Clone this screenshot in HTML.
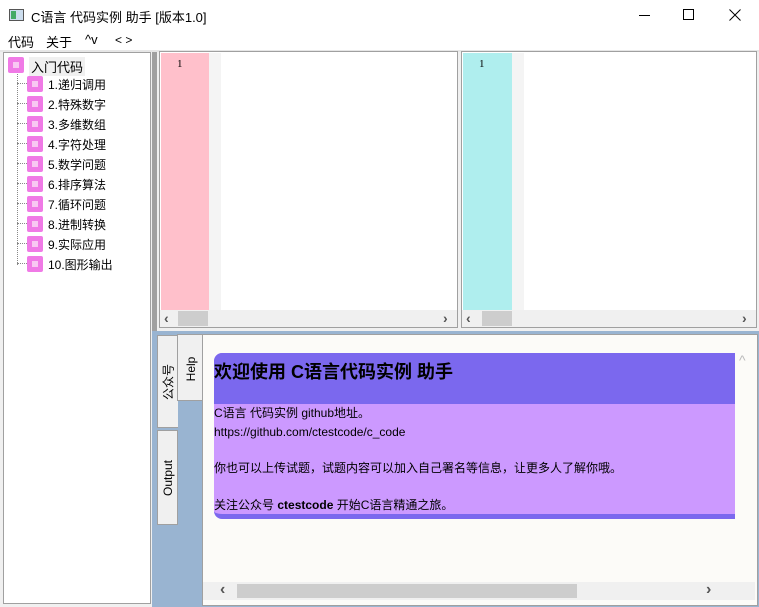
<!DOCTYPE html>
<html><head><meta charset="utf-8"><style>
*{margin:0;padding:0;box-sizing:border-box}
body{width:759px;height:607px;overflow:hidden;background:#f0f0f0;font-family:"Liberation Sans","Noto Sans CJK SC",sans-serif;font-size:12px;color:#000;position:relative}
.a{position:absolute}
.title{left:0;top:0;width:759px;height:30px;background:#fff}
.menu{left:0;top:30px;width:759px;height:20px;background:#fff}
.tree{left:3px;top:52px;width:148px;height:552px;background:#fff;border:1px solid #a0a0a0}
.ico{width:16px;height:16px;background:#f07ae6;border-radius:2px}
.ico::after{content:"";position:absolute;left:5px;top:5px;width:6px;height:6px;background:#f8c8f2}
.lbl{font-size:12px;white-space:nowrap}
.ed{border:1px solid #a0a0a0;background:#fff}
.sb{background:#f0f0f0}
.tab{background:#f0f0f0;border:1px solid #a0a0a0}
.rt{position:absolute;white-space:nowrap;font-size:12px;transform:translate(-50%,-50%) rotate(-90deg)}
.ln{position:absolute;left:0;white-space:nowrap;font-size:12px}
</style></head><body>
<div class="a title">
 <div class="a" style="left:9px;top:9px;width:15px;height:12px;border:1px solid #555;background:#cde"><div class="a" style="left:1px;top:1px;width:5px;height:8px;background:#4a6"></div></div>
 <div class="a" style="left:31px;top:7px;font-size:13px">C语言 代码实例 助手 [版本1.0]</div>
 <div class="a" style="left:639px;top:15px;width:11px;height:1px;background:#000"></div>
 <div class="a" style="left:683px;top:9px;width:11px;height:11px;border:1px solid #000"></div>
 <svg class="a" style="left:729px;top:9px" width="12" height="12"><path d="M0.5 0.5L11.5 11.5M11.5 0.5L0.5 11.5" stroke="#000" stroke-width="1"/></svg>
</div>
<div class="a menu">
 <div class="a" style="left:8px;top:2px;font-size:13px">代码</div>
 <div class="a" style="left:46px;top:2px;font-size:13px">关于</div>
 <div class="a" style="left:85px;top:2px;font-size:13px">^v</div>
 <div class="a" style="left:115px;top:3px">&lt; &gt;</div>
</div>
<div class="a" style="left:0;top:50px;width:759px;height:2px;background:#e6e6e6"></div>
<div class="a tree">
 <div class="a" style="left:13px;top:19px;height:193px;border-left:1px dotted #888"></div>
 <div class="a ico" style="left:4px;top:4px"></div>
 <div class="a lbl" style="left:25px;top:4px;background:#f0f0f0;padding:0 2px;font-size:13px">入门代码</div>
</div>
<div class="a" style="left:3px;top:52px">
 <div class="a" style="left:14px;top:31px;width:12px;border-top:1px dotted #888"></div><div class="a ico" style="left:24px;top:24px"></div><div class="a lbl" style="left:45px;top:24px">1.递归调用</div>
 <div class="a" style="left:14px;top:51px;width:12px;border-top:1px dotted #888"></div><div class="a ico" style="left:24px;top:44px"></div><div class="a lbl" style="left:45px;top:44px">2.特殊数字</div>
 <div class="a" style="left:14px;top:71px;width:12px;border-top:1px dotted #888"></div><div class="a ico" style="left:24px;top:64px"></div><div class="a lbl" style="left:45px;top:64px">3.多维数组</div>
 <div class="a" style="left:14px;top:91px;width:12px;border-top:1px dotted #888"></div><div class="a ico" style="left:24px;top:84px"></div><div class="a lbl" style="left:45px;top:84px">4.字符处理</div>
 <div class="a" style="left:14px;top:111px;width:12px;border-top:1px dotted #888"></div><div class="a ico" style="left:24px;top:104px"></div><div class="a lbl" style="left:45px;top:104px">5.数学问题</div>
 <div class="a" style="left:14px;top:131px;width:12px;border-top:1px dotted #888"></div><div class="a ico" style="left:24px;top:124px"></div><div class="a lbl" style="left:45px;top:124px">6.排序算法</div>
 <div class="a" style="left:14px;top:151px;width:12px;border-top:1px dotted #888"></div><div class="a ico" style="left:24px;top:144px"></div><div class="a lbl" style="left:45px;top:144px">7.循环问题</div>
 <div class="a" style="left:14px;top:171px;width:12px;border-top:1px dotted #888"></div><div class="a ico" style="left:24px;top:164px"></div><div class="a lbl" style="left:45px;top:164px">8.进制转换</div>
 <div class="a" style="left:14px;top:191px;width:12px;border-top:1px dotted #888"></div><div class="a ico" style="left:24px;top:184px"></div><div class="a lbl" style="left:45px;top:184px">9.实际应用</div>
 <div class="a" style="left:14px;top:211px;width:12px;border-top:1px dotted #888"></div><div class="a ico" style="left:24px;top:204px"></div><div class="a lbl" style="left:45px;top:204px">10.图形输出</div>
</div>
<div class="a" style="left:152px;top:52px;width:5px;height:555px;background:#a0a0a0"></div>
<div class="a ed" style="left:159px;top:51px;width:299px;height:277px">
 <div class="a" style="left:1px;top:1px;width:48px;height:257px;background:#ffc0cb"></div>
 <div class="a" style="left:17px;top:6px;font-size:11px;font-family:'Liberation Serif',serif">1</div>
 <div class="a" style="left:49px;top:1px;width:12px;height:257px;background:#f4f4f4"></div>
 <div class="a sb" style="left:0;top:258px;width:297px;height:17px">
  <div class="a" style="left:4px;top:0;font-size:14px;font-weight:bold;color:#555">‹</div>
  <div class="a" style="left:18px;top:1px;width:30px;height:15px;background:#cdcdcd"></div>
  <div class="a" style="left:283px;top:0;font-size:14px;font-weight:bold;color:#555">›</div>
 </div>
</div>
<div class="a ed" style="left:461px;top:51px;width:296px;height:277px">
 <div class="a" style="left:1px;top:1px;width:49px;height:257px;background:#afeeee"></div>
 <div class="a" style="left:17px;top:6px;font-size:11px;font-family:'Liberation Serif',serif">1</div>
 <div class="a" style="left:50px;top:1px;width:12px;height:257px;background:#f4f4f4"></div>
 <div class="a sb" style="left:0;top:258px;width:294px;height:17px">
  <div class="a" style="left:4px;top:0;font-size:14px;font-weight:bold;color:#555">‹</div>
  <div class="a" style="left:20px;top:1px;width:30px;height:15px;background:#cdcdcd"></div>
  <div class="a" style="left:280px;top:0;font-size:14px;font-weight:bold;color:#555">›</div>
 </div>
</div>
<div class="a" style="left:152px;top:331px;width:607px;height:276px;background:#99b4d1"></div>
<div class="a tab" style="left:157px;top:335px;width:21px;height:93px;border-right:none"><div class="rt" style="left:10px;top:46px">公众号</div></div>
<div class="a tab" style="left:157px;top:430px;width:21px;height:95px"><div class="rt" style="left:10px;top:47px">Output</div></div>
<div class="a" style="left:177px;top:334px;width:27px;height:67px;background:#f0f0f0;border:1px solid #a0a0a0;border-right:none"><div class="rt" style="left:13px;top:34px">Help</div></div>
<div class="a" style="left:202px;top:334px;width:556px;height:272px;background:#fcfbf8;border:1px solid #a0a0a0"></div>
<div class="a" style="left:214px;top:353px;width:521px;height:166px;background:#cc99ff;border-radius:8px 0 0 8px;overflow:hidden;border-bottom:5px solid #7b68ee">
 <div class="a" style="left:0;top:0;width:521px;height:51px;background:#7b68ee"></div>
 <div class="ln" style="top:5px;font-size:18px;font-weight:bold">欢迎使用 C语言代码实例 助手</div>
 <div class="ln" style="top:51px">C语言 代码实例 github地址。</div>
 <div class="ln" style="top:72px">https://github.com/ctestcode/c_code</div>
 <div class="ln" style="top:106px">你也可以上传试题，试题内容可以加入自己署名等信息，让更多人了解你哦。</div>
 <div class="ln" style="top:143px">关注公众号 <b>ctestcode</b> 开始C语言精通之旅。</div>
</div>
<div class="a" style="left:735px;top:352px;width:20px;height:230px;background:#fcfbf8"><div class="a" style="left:4px;top:0;color:#bbb;font-size:14px">^</div></div>
<div class="a" style="left:203px;top:582px;width:552px;height:18px;background:#f0f0f0">
 <div class="a" style="left:17px;top:-1px;font-size:16px;font-weight:bold;color:#555">‹</div>
 <div class="a" style="left:34px;top:2px;width:340px;height:14px;background:#cdcdcd"></div>
 <div class="a" style="left:503px;top:-1px;font-size:16px;font-weight:bold;color:#555">›</div>
</div>
</body></html>
